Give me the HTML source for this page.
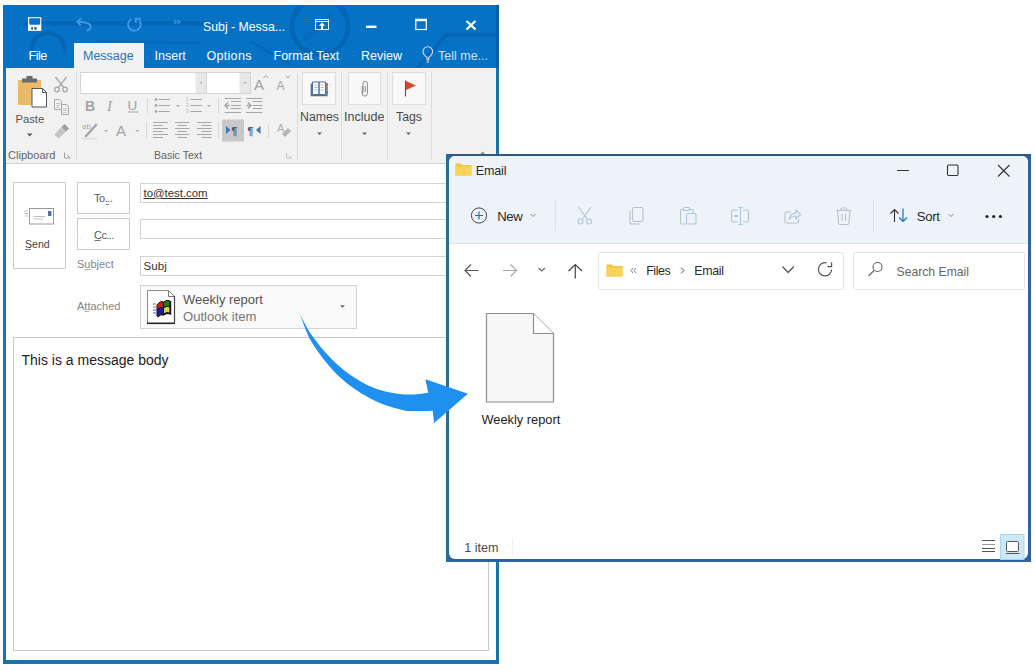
<!DOCTYPE html>
<html><head><meta charset="utf-8">
<style>
*{margin:0;padding:0;box-sizing:border-box}
html,body{width:1035px;height:671px;overflow:hidden;background:#fff;font-family:"Liberation Sans",sans-serif;position:relative}
.a{position:absolute}
.t{position:absolute;white-space:nowrap;line-height:1}
svg.full{position:absolute;left:0;top:0;width:1035px;height:671px}
#ol{left:3px;top:5px;width:496px;height:659px;background:#fff;border:3px solid #1772ad;border-top:0;border-bottom-width:4px}
#tb{left:3px;top:5px;width:496px;height:63px;background:#0672c6}
#rib{left:6px;top:68px;width:490px;height:96px;background:#f1f1f1;border-bottom:1px solid #d4d4d4}
.wt{color:#fff;font-size:12.5px}
.btn{position:absolute;border:1px solid #cdcdcd;background:#fff}
.inp{position:absolute;border:1px solid #d2d2d2;background:#fff}
.lbl{color:#858585;font-size:11px}
.rl{color:#4a4a4a;font-size:12.5px}
#exb{left:446px;top:154px;width:585px;height:408px;background:#2f62a0}
#ex{left:448.5px;top:156px;width:579.5px;height:403px;border-radius:6px;background:#fff;overflow:hidden}
#exhead{left:0;top:0;width:100%;height:88px;background:#eef3f9;border-bottom:1px solid #dfe4ea}
</style></head><body>
<!-- ================= OUTLOOK ================= -->
<div class="a" id="ol"></div>
<div class="a" id="tb"></div>
<div class="a" id="rib"></div>
<div class="a" style="left:496px;top:5px;width:3px;height:63px;background:#0a5ca6"></div>

<svg class="full" viewBox="0 0 1035 671">
  <!-- title decoration -->
  <clipPath id="tbclip"><rect x="3" y="5" width="496" height="63"/></clipPath>
  <g stroke="#0562b0" fill="none" stroke-linecap="round" clip-path="url(#tbclip)" opacity=".75">
    <line x1="26" y1="23.5" x2="212" y2="23.5" stroke-width="4.5"/>
    <path d="M31 50 A17 17 0 0 1 65 50" stroke-width="4"/>
    <path d="M97 41 L200 43" stroke-width="3" opacity=".6"/>
    <circle cx="320" cy="26.5" r="28" stroke-width="5"/>
    <path d="M306 38 L329 16" stroke-width="5" opacity=".5"/>
    <path d="M252 42 L290 64" stroke-width="3" opacity=".7"/>
    <path d="M418 68 L446 35 L499 35" stroke-width="3.5"/>
  </g>
  <!-- QAT -->
  <g fill="none">
    <rect x="28" y="17.2" width="13.3" height="13.7" fill="#fff"/>
    <path d="M29.2 18.3 H40.2 V23.5 Q40.2 24.7 39 24.7 H30.4 Q29.2 24.7 29.2 23.5 Z" fill="#0672c6"/>
    <rect x="31.2" y="27" width="1.8" height="2.8" fill="#3a6f95"/>
    <rect x="34.4" y="27" width="2.2" height="2.8" fill="#2a5f8a"/>
    <path d="M77.5 21.8 C83 22 90.8 23 90.8 26.8 C90.8 29.2 89 30.3 86.5 30.8 M81.2 18.4 L77.3 21.8 L80.7 25.4" stroke="#3f97e2" stroke-width="1.9"/>
    <path d="M131.3 19 A6.3 6.3 0 1 0 139.3 20.5" stroke="#3f97e2" stroke-width="1.9"/><path d="M141 18.8 L135.8 18.8 L135.8 23" stroke="#3f97e2" stroke-width="1.9"/>
    <path d="M174 20 L176.5 22 L174 24 M177.5 20 L180 22 L177.5 24" stroke="#3f97e2" stroke-width="1.2"/>
    <!-- ribbon display options -->
    <rect x="315.5" y="19.5" width="13" height="10" stroke="#e6f0fa" stroke-width="1"/>
    <line x1="315.5" y1="21.5" x2="328.5" y2="21.5" stroke="#e6f0fa" stroke-width="1"/>
    <path d="M322 22.5 L325.2 25.8 L323 25.8 L323 29.5 L321 29.5 L321 25.8 L318.8 25.8 Z" fill="#fff"/>
    <!-- min max close -->
    <rect x="366" y="25.6" width="10.5" height="2.4" fill="#fff"/>
    <rect x="415.8" y="19.5" width="10.5" height="10" stroke="#fff" stroke-width="1.2"/>
    <rect x="415.2" y="18.8" width="11.6" height="2.4" fill="#fff"/>
    <path d="M466.5 21 L475.5 29.5 M475.5 21 L466.5 29.5" stroke="#fff" stroke-width="2.2"/>
    <!-- lightbulb -->
    <path d="M427 60 L427 57.5 Q423 54.5 423 51.5 A4.8 4.8 0 0 1 432.6 51.5 Q432.6 54.5 428.6 57.5 L428.6 60 Z M426.5 62 L429 62" stroke="#cfe0f2" stroke-width="1.1"/>
  </g>
  <!-- message tab -->
  <rect x="74" y="43" width="70" height="26" fill="#f1f1f1"/>
</svg>

<!-- tab text -->
<div class="t wt" style="left:203px;top:20.5px;font-size:12.3px">Subj - Messa...</div>
<div class="t wt" style="left:28.5px;top:50.3px;font-size:12.8px;letter-spacing:-.6px">File</div>
<div class="t" style="left:83px;top:50.3px;font-size:12.5px;color:#2e72b7">Message</div>
<div class="t wt" style="left:154.5px;top:50.3px">Insert</div>
<div class="t wt" style="left:206.5px;top:50.3px;letter-spacing:.3px">Options</div>
<div class="t wt" style="left:273.5px;top:50.3px">Format Text</div>
<div class="t wt" style="left:361px;top:50.3px">Review</div>
<div class="t wt" style="left:438px;top:50.3px;color:#cfe0f2">Tell me...</div>

<!-- ribbon -->
<svg class="full" viewBox="0 0 1035 671">
  <g fill="none">
    <!-- group separators -->
    <g stroke="#dcdcdc" stroke-width="1">
      <line x1="76.5" y1="71" x2="76.5" y2="160"/>
      <line x1="297.5" y1="71" x2="297.5" y2="160"/>
      <line x1="341.5" y1="71" x2="341.5" y2="160"/>
      <line x1="387.5" y1="71" x2="387.5" y2="160"/>
      <line x1="431.5" y1="71" x2="431.5" y2="160"/>
    </g>
    <!-- clipboard -->
    <rect x="18" y="80" width="23" height="25" fill="#e9bb68"/>
    <rect x="22" y="78.5" width="15" height="4" fill="#6b6b6b"/>
    <rect x="26.5" y="76" width="6" height="3.5" fill="#6b6b6b"/>
    <path d="M32 88.5 L42.5 88.5 L46.5 92.5 L46.5 107 L32 107 Z" fill="#fff" stroke="#555" stroke-width="1"/>
    <path d="M42.5 88.5 L42.5 92.5 L46.5 92.5" stroke="#555" stroke-width="1"/>
    <path d="M27 133.5 L32.5 133.5 L29.75 136.5 Z" fill="#555"/>
    <!-- scissors -->
    <g stroke="#a8a8a8" stroke-width="1.3">
      <path d="M55.5 77 L64 88 M66.5 77 L58 88"/>
      <circle cx="57" cy="89.5" r="2.3"/><circle cx="65" cy="89.5" r="2.3"/>
    </g>
    <!-- copy -->
    <g stroke="#a8a8a8" stroke-width="1" fill="#f1f1f1">
      <path d="M54.5 99.5 L59.5 99.5 L61.5 101.5 L61.5 109.5 L54.5 109.5 Z"/>
      <path d="M61.5 104.5 L66.5 104.5 L68.5 106.5 L68.5 114.5 L61.5 114.5 Z"/>
      <path d="M56 103.5 H60 M56 105.5 H60 M56 107.5 H59 M63 108.5 H67 M63 110.5 H67 M63 112.5 H66" stroke="#b5b5b5" stroke-width=".7"/>
    </g>
    <!-- format painter -->
    <path d="M54.5 134.5 L61.5 127 L66 131.5 L58.5 138.5 Z" fill="#c4c4c4"/>
    <path d="M61.5 127 L64.5 124 L69 128.5 L66 131.5 Z" fill="#9e9e9e"/>
    <!-- launcher -->
    <path d="M64.5 152.5 L64.5 158 L70 158 M67 155 L70.5 158.5" stroke="#a0a0a0" stroke-width="1"/>
    <!-- font boxes -->
    <rect x="80.5" y="72.5" width="126" height="21" fill="#fff" stroke="#d4d4d4"/>
    <rect x="195.5" y="73" width="10.5" height="20" fill="#e8e8e8"/>
    <rect x="206.5" y="72.5" width="44" height="21" fill="#fff" stroke="#d4d4d4"/>
    <rect x="239.5" y="73" width="10.5" height="20" fill="#e8e8e8"/>
    <path d="M199 82 L203 82 L201 84 Z M243 82 L247 82 L245 84 Z" fill="#b8b8b8"/>
    <!-- grow/shrink -->
    <text x="254" y="90" font-family="Liberation Sans" font-size="15" fill="#a3a3a3">A</text>
    <path d="M263.5 78 L265.7 75.5 L268 78" stroke="#a3a3a3" stroke-width="1"/>
    <text x="276.5" y="90" font-family="Liberation Sans" font-size="12" fill="#a3a3a3">A</text>
    <path d="M285.5 75.5 L287.7 78 L290 75.5" stroke="#a3a3a3" stroke-width="1"/>
    <!-- row 2 -->
    <text x="85" y="110.5" font-family="Liberation Sans" font-weight="bold" font-size="14" fill="#a3a3a3">B</text>
    <text x="107" y="110.5" font-family="Liberation Serif" font-style="italic" font-size="15" fill="#a3a3a3">I</text>
    <text x="127.5" y="109.5" font-family="Liberation Sans" font-size="13.5" fill="#a3a3a3">U</text>
    <line x1="128" y1="112" x2="138.5" y2="112" stroke="#a3a3a3" stroke-width="1"/>
    <g stroke="#d8d8d8"><line x1="147.5" y1="98" x2="147.5" y2="113.5"/><line x1="218.5" y1="98" x2="218.5" y2="113.5"/>
      <line x1="146.5" y1="122" x2="146.5" y2="138"/><line x1="218.5" y1="122" x2="218.5" y2="138"/><line x1="268.5" y1="124" x2="268.5" y2="138"/></g>
    <g fill="#a8a8a8">
      <circle cx="156" cy="99.5" r="1.4"/><circle cx="156" cy="105.5" r="1.4"/><circle cx="156" cy="111.5" r="1.4"/>
      <path d="M176 105 L180 105 L178 107 Z M207 105 L211 105 L209 107 Z M104 130 L108 130 L106 132 Z M135.5 130 L139.5 130 L137.5 132 Z"/>
    </g>
    <g stroke="#a8a8a8" stroke-width="1">
      <path d="M158.5 99.5 H170 M158.5 105.5 H170 M158.5 111.5 H170"/>
      <path d="M190.5 99.5 H202 M190.5 105.5 H202 M190.5 111.5 H202"/>
    </g>
    <g font-family="Liberation Sans" font-size="4.5" fill="#b0b0b0"><text x="186" y="101">1</text><text x="186" y="107">2</text><text x="186" y="113">3</text></g>
    <!-- indent -->
    <g stroke="#a8a8a8" stroke-width="1">
      <path d="M224.5 98.5 H241 M231 101.5 H241 M231 105.5 H241 M231 108.5 H241 M224.5 112.5 H241"/>
      <path d="M246 98.5 H262.5 M252.5 101.5 H262.5 M252.5 105.5 H262.5 M252.5 108.5 H262.5 M246 112.5 H262.5"/>
      <path d="M229.5 105.5 H225 M228 102.5 L225 105.5 L228 108.5" stroke-width="1.5"/>
      <path d="M246.5 105.5 H251 M248 102.5 L251 105.5 L248 108.5" stroke-width="1.5"/>
    </g>
    <!-- row 3 -->
    <text x="82" y="128.5" font-family="Liberation Sans" font-size="8" fill="#a8a8a8">ab</text>
    <path d="M86 136 L96 125" stroke="#a8a8a8" stroke-width="2.6" stroke-linecap="round"/>
    <rect x="82" y="138" width="15" height="1.5" fill="#dedede"/>
    <text x="116" y="135.5" font-family="Liberation Sans" font-size="15" fill="#a3a3a3">A</text>
    <g stroke="#a8a8a8" stroke-width="1">
      <path d="M153 122.5 H168 M153 125.5 H163 M153 128.5 H168 M153 131.5 H163 M153 134.5 H168 M153 137.5 H163"/>
      <path d="M175 122.5 H189.5 M177.5 125.5 H187 M175 128.5 H189.5 M177.5 131.5 H187 M175 134.5 H189.5 M177.5 137.5 H187"/>
      <path d="M197 122.5 H211.5 M201.5 125.5 H211.5 M197 128.5 H211.5 M201.5 131.5 H211.5 M197 134.5 H211.5 M201.5 137.5 H211.5"/>
    </g>
    <rect x="222" y="119.5" width="22" height="22" fill="#c8c8c8"/>
    <path d="M226 126 L230.5 130 L226 134 Z" fill="#3c77b3"/>
    <text x="231.5" y="135" font-family="Liberation Sans" font-weight="bold" font-size="10.5" fill="#555">¶</text>
    <text x="247.5" y="135" font-family="Liberation Sans" font-weight="bold" font-size="10.5" fill="#555">¶</text>
    <path d="M260.5 126 L256 130 L260.5 134 Z" fill="#3c77b3"/>
    <text x="277" y="132" font-family="Liberation Sans" font-size="11" fill="#b0b0b0">A</text>
    <path d="M282 134 L288 128 L291 131 L285 137 Z" fill="#b5b5b5"/>
    <path d="M286.5 153 L286.5 158 L291.5 158 M289 155.5 L292 158.5" stroke="#c0c0c0" stroke-width="1"/>
    <!-- names include tags -->
    <rect x="302.5" y="72.5" width="33" height="32" fill="#f8f8f8" stroke="#dcdcdc"/>
    <rect x="348.5" y="72.5" width="32" height="32" fill="#f8f8f8" stroke="#dcdcdc"/>
    <rect x="392.5" y="72.5" width="33" height="32" fill="#f8f8f8" stroke="#dcdcdc"/>
    <path d="M311.3 83.5 L311.3 95.5 L327 95.5 L327 83.5" stroke="#4c6f97" stroke-width="1.3"/>
    <path d="M312.5 82 L319 82 L319 94.5 L312.5 94.5 Z M319 82 L325.5 82 L325.5 94.5 L319 94.5 Z" fill="#fff" stroke="#4c6f97" stroke-width="1"/>
    <g stroke="#9fb3c8" stroke-width=".8"><path d="M314 85 H317.5 M314 87.5 H317.5 M314 90 H317.5 M320.5 85 H324 M320.5 87.5 H324 M320.5 90 H324"/></g>
    <rect x="326" y="83" width="1.6" height="3" fill="#d9533b"/><rect x="326" y="87" width="1.6" height="3" fill="#5aa050"/><rect x="326" y="91" width="1.6" height="3" fill="#3e7bbf"/>
    <path d="M363 93 L363 83.5 A2.2 2.2 0 0 1 367.4 83.5 L367.4 93.5 A2.6 2.6 0 0 1 362.2 93.5 L362.2 86 M365.2 86 L365.2 92" stroke="#8a8a8a" stroke-width="1"/>
    <line x1="405.5" y1="80.5" x2="405.5" y2="96.5" stroke="#555" stroke-width="1.1"/>
    <path d="M406 81 L416 85.5 L406 90 Z" fill="#d9482b"/>
    <path d="M317 132.5 L322 132.5 L319.5 135 Z M362 132.5 L367 132.5 L364.5 135 Z M406 132.5 L411 132.5 L408.5 135 Z" fill="#666"/>
    <!-- collapse caret -->
    <path d="M479.5 155 L482.7 151.5 L486 155 Z" fill="#8a8a8a"/>
  </g>
</svg>
<div class="t" style="left:15.5px;top:113.7px;font-size:11.2px;color:#555">Paste</div>
<div class="t" style="left:8px;top:149.7px;font-size:11.1px;color:#666">Clipboard</div>
<div class="t" style="left:154px;top:149.8px;font-size:10.6px;color:#666">Basic Text</div>
<div class="t rl" style="left:300px;top:111.2px;font-size:12.3px">Names</div>
<div class="t rl" style="left:344px;top:111.2px;font-size:12.6px">Include</div>
<div class="t rl" style="left:396px;top:111.2px;font-size:12.3px">Tags</div>

<!-- header area -->
<div class="btn" style="left:13px;top:182px;width:53px;height:87px"></div>
<div class="btn" style="left:77px;top:182px;width:53px;height:32px"></div>
<div class="btn" style="left:77px;top:218px;width:53px;height:32px"></div>
<div class="inp" style="left:140px;top:183px;width:320px;height:20px"></div>
<div class="inp" style="left:140px;top:219px;width:320px;height:20px"></div>
<div class="inp" style="left:140px;top:256px;width:320px;height:20px"></div>
<div class="inp" style="left:140px;top:285px;width:217px;height:44px;background:#fafafa"></div>
<div class="a" style="left:13px;top:337px;width:476px;height:314px;border:1px solid #c9c9c9"></div>
<svg class="full" viewBox="0 0 1035 671">
  <g fill="none">
    <rect x="29.5" y="208.5" width="24" height="15.5" fill="#fff" stroke="#9a9a9a" stroke-width="1"/>
    <rect x="48" y="211" width="3.4" height="5" fill="#4a72a8"/>
    <path d="M33.5 216.5 H45 M33.5 219 H43" stroke="#b0b0b0" stroke-width=".8"/>
    <path d="M24.3 211 H28 M24.8 213.5 H28 M25.5 216 H28" stroke="#b5b5b5" stroke-width="1"/>
    <line x1="25" y1="249.5" x2="31" y2="249.5" stroke="#555" stroke-width=".8"/>
    <line x1="94.5" y1="240.5" x2="100.5" y2="240.5" stroke="#555" stroke-width=".8"/>
    <line x1="106" y1="204.5" x2="109" y2="204.5" stroke="#666" stroke-width=".8"/>
    <line x1="84.5" y1="269.5" x2="90.5" y2="269.5" stroke="#999" stroke-width=".8"/>
    <line x1="84.5" y1="311.5" x2="89" y2="311.5" stroke="#999" stroke-width=".8"/>
    <!-- attachment icon -->
    <path d="M147.5 290.5 L168.5 290.5 L174.5 296.5 L174.5 323.5 L147.5 323.5 Z" fill="#fff" stroke="#8a8a8a" stroke-width="1"/>
    <path d="M147 323.3 L175 323.3" stroke="#222" stroke-width="1.6"/>
    <path d="M168.5 290.5 L168.5 296.5 L174.5 296.5" stroke="#777" stroke-width="1"/>
    <path d="M174.5 296 L174.5 323.5" stroke="#444" stroke-width="1.2"/>
    <path d="M157 305 Q161 300 163.5 302 L163.5 308 Q161 306 157 310 Z" fill="#c22418" stroke="#111" stroke-width="1"/>
    <path d="M163.5 302 Q167 299 170 301 L170 307 Q167 305 163.5 308 Z" fill="#1f7a22" stroke="#111" stroke-width="1"/>
    <path d="M157 310 Q161 306 163.5 308 L163.5 314 Q161 312 157 316 Z" fill="#1a1aa8" stroke="#111" stroke-width="1"/>
    <path d="M163.5 308 Q167 305 170 307 L170 313.5 Q167 311 163.5 314 Z" fill="#dcd448" stroke="#111" stroke-width="1"/>
    <path d="M170.5 301 L170.5 314 Q167 312 163.5 315 Q161 313.5 157.5 317" stroke="#111" stroke-width="1.4"/>
    <g stroke="#d84040" stroke-width=".9"><path d="M153 304 H156 M153 307 H156"/></g>
    <g stroke="#3a3ad0" stroke-width=".9"><path d="M153 310 H156 M153 313 H156"/></g>
    <path d="M340 305.3 L345 305.3 L342.5 307.8 Z" fill="#666"/>
  </g>
</svg>
<div class="t" style="left:25px;top:238.9px;font-size:10.6px;color:#444">Send</div>
<div class="t" style="left:94px;top:193px;font-size:11px;color:#5a5a5a;letter-spacing:-.45px">To...</div>
<div class="t" style="left:94px;top:229.5px;font-size:11px;color:#5a5a5a;letter-spacing:-.55px">Cc...</div>
<div class="t lbl" style="left:77px;top:259px">Subject</div>
<div class="t lbl" style="left:77px;top:301px">Attached</div>
<div class="t" style="left:143.5px;top:187.8px;font-size:11.4px;color:#333;text-decoration:underline">to@test.com</div>
<div class="t" style="left:143.5px;top:260.3px;font-size:11.6px;color:#333">Subj</div>
<div class="t" style="left:183px;top:292.7px;font-size:13px;color:#555">Weekly report</div>
<div class="t" style="left:183px;top:309.7px;font-size:13.1px;color:#777">Outlook item</div>
<div class="t" style="left:21.5px;top:352.5px;font-size:14px;color:#222">This is a message body</div>

<!-- ================= EXPLORER ================= -->
<div class="a" id="exb"></div>
<div class="a" style="left:446px;top:154px;width:585px;height:2px;background:#2c5a80"></div>
<div class="a" style="left:446px;top:154px;width:2.5px;height:408px;background:#2b6b98"></div>
<div class="a" id="ex">
  <div class="a" id="exhead"></div>
</div>
<svg class="full" viewBox="0 0 1035 671">
  <g fill="none">
    <!-- title folder -->
    <path d="M455.5 163.5 L461 163.5 L462.5 165 L471.5 165 L471.5 175.5 L455.5 175.5 Z" fill="#f5c444"/>
    <rect x="455.5" y="166.5" width="16" height="9" fill="#fbd35a"/>
    <!-- window controls -->
    <line x1="897" y1="170.5" x2="909" y2="170.5" stroke="#333" stroke-width="1"/>
    <rect x="947.5" y="165" width="10.5" height="10.5" rx="1.2" stroke="#333" stroke-width="1.1"/>
    <path d="M998 165 L1009.5 176.5 M1009.5 165 L998 176.5" stroke="#333" stroke-width="1.1"/>
    <!-- new -->
    <circle cx="479" cy="215.5" r="7.6" stroke="#444" stroke-width="1"/>
    <path d="M479 211.5 V219.5 M475 215.5 H483" stroke="#1c6fc0" stroke-width="1.2"/>
    <path d="M530.5 214 L533 216.5 L535.5 214" stroke="#777" stroke-width=".9"/>
    <line x1="555.5" y1="199" x2="555.5" y2="231" stroke="#dde2e8"/>
    <line x1="873.5" y1="199" x2="873.5" y2="232" stroke="#dde2e8"/>
    <!-- cut -->
    <g stroke="#a8c6e0" stroke-width="1.1">
      <path d="M578.5 207 L587 219 M591 207 L582.5 219"/>
      <circle cx="580.5" cy="221.5" r="2.5"/><circle cx="589" cy="221.5" r="2.5"/>
    </g>
    <!-- copy -->
    <g stroke="#b8c2cc" stroke-width="1.1">
      <rect x="632.5" y="207.5" width="10.5" height="14" rx="1.5" fill="#eef3f9"/>
      <path d="M630 211 L630 222 Q630 224 632 224 L640 224"/>
    </g>
    <!-- paste -->
    <g stroke="#b8c2cc" stroke-width="1.1">
      <path d="M684 209.5 L681.5 209.5 Q680.5 209.5 680.5 210.5 L680.5 223 Q680.5 224 681.5 224 L686 224"/>
      <path d="M689 209.5 L692 209.5 Q693 209.5 693 210.5 L693 213"/>
      <rect x="683.5" y="207.5" width="6" height="3" rx="1"/>
      <rect x="686.5" y="213.5" width="9.5" height="10.5" rx="1.2" fill="#eef3f9" stroke="#a8c6e0"/>
    </g>
    <!-- rename -->
    <g stroke="#b8c2cc" stroke-width="1.1">
      <path d="M738 210 L733 210 Q731.5 210 731.5 211.5 L731.5 220.5 Q731.5 222 733 222 L738 222"/>
      <path d="M743 210 L747 210 Q748.5 210 748.5 211.5 L748.5 220.5 Q748.5 222 747 222 L743 222"/>
      <path d="M740.5 207.5 V224.5 M738 207.5 H743 M738 224.5 H743" stroke="#a8c6e0"/>
      <path d="M734 216 H738" stroke="#a8c6e0" stroke-width="2"/>
    </g>
    <!-- share -->
    <g stroke="#b8c2cc" stroke-width="1.1">
      <path d="M791 212 L786.5 212 Q785 212 785 213.5 L785 221.5 Q785 223 786.5 223 L797 223 Q798.5 223 798.5 221.5 L798.5 219"/>
      <path d="M789 219.5 Q790 213 796 213 L796 210 L800.5 214.5 L796 219 L796 216 Q791.5 216 789 219.5 Z" stroke="#a8c6e0"/>
    </g>
    <!-- delete -->
    <g stroke="#b8c2cc" stroke-width="1.1">
      <path d="M836 210.5 H851.5 M841 210.5 V209 Q841 208 842 208 L845.5 208 Q846.5 208 846.5 209 V210.5"/>
      <path d="M837.5 210.5 L838.5 223 Q838.7 224.5 840 224.5 L847.5 224.5 Q848.8 224.5 849 223 L850 210.5"/>
      <path d="M842 214 V221 M845.5 214 V221"/>
    </g>
    <!-- sort -->
    <path d="M894.5 222 V209.5 M890.5 213.5 L894.5 209.5 L898.5 213.5" stroke="#333" stroke-width="1.1"/>
    <path d="M903 208.5 V221.5 M899 217.5 L903 221.5 L907 217.5" stroke="#1c6fc0" stroke-width="1.2"/>
    <path d="M948.5 214 L951 216.5 L953.5 214" stroke="#777" stroke-width=".9"/>
    <g fill="#222"><circle cx="987" cy="216.5" r="1.6"/><circle cx="993.7" cy="216.5" r="1.6"/><circle cx="1000.4" cy="216.5" r="1.6"/></g>
    <!-- nav -->
    <path d="M465 270.5 H478.5 M471 264.5 L465 270.5 L471 276.5" stroke="#555" stroke-width="1.2"/>
    <path d="M503 270.5 H516.5 M510.5 264.5 L516.5 270.5 L510.5 276.5" stroke="#aaa" stroke-width="1.2"/>
    <path d="M538.5 268 L541.7 271 L545 268" stroke="#666" stroke-width="1.1"/>
    <path d="M575.3 278.5 V264.5 M568.5 271 L575.3 264.5 L582 271" stroke="#444" stroke-width="1.2"/>
    <!-- address folder -->
    <path d="M606.5 264.5 L612 264.5 L613.5 266 L622.5 266 L622.5 276.5 L606.5 276.5 Z" fill="#f5c444"/>
    <rect x="606.5" y="267.5" width="16" height="9" fill="#fbd35a"/>
    <path d="M633 268 L631 270.5 L633 273 M636 268 L634 270.5 L636 273" stroke="#777" stroke-width=".9"/>
    <path d="M681 267.5 L684 270.5 L681 273.5" stroke="#555" stroke-width="1"/>
    <path d="M782.5 266.5 L788.2 272.5 L793.8 266.5" stroke="#555" stroke-width="1.2"/>
    <path d="M831.6 269.4 A6.6 6.6 0 1 1 826.5 262.9" stroke="#555" stroke-width="1.2"/><path d="M827.3 266.6 L831.6 266.6 L831.6 262.3" stroke="#555" stroke-width="1.2"/>
    <!-- search -->
    <circle cx="877.5" cy="267" r="4.5" stroke="#666" stroke-width="1.1"/>
    <path d="M874.3 270.3 L868.5 276" stroke="#666" stroke-width="1.2"/>
    <!-- file icon -->
    <path d="M486.5 313.5 L533.5 313.5 L553.5 333.5 L553.5 402 L486.5 402 Z" fill="#f7f7f7" stroke="#8e8e8e" stroke-width="1.2"/>
    <path d="M533.5 313.5 L533.5 333.5 L553.5 333.5" fill="#fff" stroke="#8e8e8e" stroke-width="1.2"/>
    <!-- status -->
    <line x1="512.5" y1="538" x2="512.5" y2="556" stroke="#f0f0f0"/>
    <g stroke="#555" stroke-width="1"><path d="M982 540.5 H995 M982 548.5 H995 M982 551.5 H995"/></g>
    <path d="M982 544.5 H995" stroke="#999" stroke-width="1"/>
    <rect x="1000.5" y="534.5" width="23.5" height="25" fill="#cde8f7" stroke="#aad5ee"/>
    <rect x="1006.5" y="541.5" width="12" height="10" rx="1" fill="#fff" stroke="#555" stroke-width="1"/>
    <line x1="1006" y1="553.5" x2="1019.5" y2="553.5" stroke="#555" stroke-width="1"/>
  </g>
</svg>
<div class="a" style="left:598px;top:252px;width:246px;height:38px;border:1px solid #e6e6e6;border-radius:2px"></div>
<div class="a" style="left:853px;top:252px;width:172px;height:38px;border:1px solid #e6e6e6;border-radius:2px"></div>
<div class="t" style="left:475.8px;top:164.8px;font-size:12.6px;letter-spacing:-.2px;color:#2a2a2a">Email</div>
<div class="t" style="left:497.2px;top:210.2px;font-size:13.2px;letter-spacing:-.35px;color:#2a2a2a">New</div>
<div class="t" style="left:916.7px;top:210.2px;font-size:13.2px;letter-spacing:-.3px;color:#2a2a2a">Sort</div>
<div class="t" style="left:646.2px;top:264.6px;font-size:12.4px;letter-spacing:-.4px;color:#2a2a2a">Files</div>
<div class="t" style="left:694.2px;top:264.6px;font-size:12.4px;letter-spacing:-.3px;color:#2a2a2a">Email</div>
<div class="t" style="left:896.5px;top:265.7px;font-size:12.2px;color:#666">Search Email</div>
<div class="t" style="left:481.5px;top:414px;font-size:12.8px;color:#222">Weekly report</div>
<div class="t" style="left:464.3px;top:542px;font-size:12.6px;color:#4a4a4a">1 item</div>

<!-- ================= ARROW ================= -->
<svg class="full" viewBox="0 0 1035 671">
  <path d="M300.2 314.5 C301.8 317.5 305.8 326.2 309.9 332.4 C314.0 338.6 319.8 346.0 324.8 351.7 C329.8 357.4 334.7 362.2 339.7 366.6 C344.7 371.0 349.6 374.6 354.6 377.8 C359.6 381.0 364.5 383.8 369.5 386.0 C374.5 388.2 378.6 389.8 384.4 391.2 C390.2 392.6 398.5 393.9 404.2 394.4 C409.9 394.9 414.6 394.3 418.6 394.0 C422.6 393.7 426.6 393.0 428.2 392.8 L425.4 379.2 L467.9 393.7 L434.1 423.1 L432.7 410.8 C430.4 410.9 423.4 411.2 418.6 411.1 C413.9 411.0 409.0 411.2 404.2 410.4 C399.4 409.6 393.7 407.7 389.7 406.5 C385.7 405.3 383.4 404.4 380.0 403.0 C376.6 401.6 373.7 400.3 369.5 398.0 C365.3 395.7 359.6 392.5 354.6 389.0 C349.6 385.5 344.7 381.7 339.7 377.0 C334.7 372.3 329.8 367.0 324.8 360.7 C319.8 354.4 314.0 346.7 309.9 339.0 C305.8 331.3 301.8 318.6 300.2 314.5 Z" fill="#1f8ff0"/>
</svg>
</body></html>
